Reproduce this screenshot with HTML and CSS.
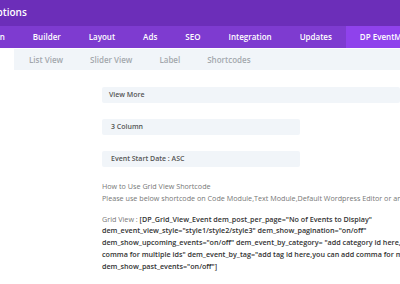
FILE: index.html
```html
<html>

<head>
<link rel="stylesheet" href="styles.css">
</head>

<body>

<div class="header">
    <h1>Theme Options</h1>
</div>

<div class="nav">
    <a href="#">Navigation</a>
    <a href="#">Builder</a>
    <a href="#">Layout</a>
    <a href="#">Ads</a>
    <a href="#">SEO</a>
    <a href="#">Integration</a>
    <a href="#">Updates</a>
    <a href="#" class="active">DP EventManager</a>
</div>

<div class="subnav">
    <a href="#">List View</a>
    <a href="#">Slider View</a>
    <a href="#">Label</a>
    <a href="#">Shortcodes</a>
</div>

<div class="content">
    <div class="fields">
        <div class="field wide">View More</div>
        <div class="field">3 Column</div>
        <div class="field">Event Start Date : ASC</div>
    </div>

    <div class="info">
        <p>
            How to Use Grid View Shortcode<br>
            Please use below shortcode on Code Module,Text Module,Default Wordpress Editor or any other place
        </p>
        <p>
            Grid View : <b>[DP_Grid_View_Event dem_post_per_page="No of Events to Display"<br>
            dem_event_view_style="style1/style2/style3" dem_show_pagination="on/off"<br>
            dem_show_upcoming_events="on/off" dem_event_by_category= "add category id here, you can add<br>
            comma for multiple ids" dem_event_by_tag="add tag id here,you can add comma for multiple ids"<br>
            dem_show_past_events="on/off"]</b>
        </p>
    </div>
</div>

</body>

</html>
```

FILE: styles.css
```css
html,
body {
    margin: 0;
    overflow: hidden;
    background: #fff;
    font-family: "Open Sans", sans-serif;
}

a {
    text-decoration: none;
}

.header {
    height: 26px;
    background: #6c2eb9;
    color: #fff;
    display: flex;
    align-items: center;
    overflow: hidden;
}
.header h1 {
    margin: 0 0 3px -47px;
    font-size: 10px;
    font-weight: 600;
    white-space: nowrap;
}

.nav {
    height: 22px;
    background: #7e3bd0;
    display: flex;
    overflow: hidden;
}
.nav a {
    flex: none;
    padding: 0 14px;
    line-height: 22px;
    font-size: 8px;
    font-weight: 600;
    color: #fff;
}
.nav a:first-child {
    margin-left: -51px;
}
.nav a.active {
    background: #8f42ec;
}

.subnav {
    margin: 1px 0 0 14px;
    height: 21px;
    background: #f1f5f9;
    display: flex;
    align-items: center;
}
.subnav a {
    padding: 0 13.5px;
    font-size: 8px;
    font-weight: 600;
    color: #a3a8ad;
}
.subnav a:first-child {
    padding-left: 15px;
}

.content {
    padding: 17px 0 0 102px;
}

.fields {
    display: flex;
    flex-direction: column;
    gap: 16px;
}
.field {
    width: 189px;
    height: 16px;
    padding-left: 9px;
    line-height: 16px;
    background: #f1f5f9;
    border-radius: 2px;
    font-size: 7px;
    font-weight: 600;
    color: #555;
}
.field.wide {
    width: auto;
    padding-left: 7px;
}

.info {
    margin-top: 14px;
    font-size: 7.2px;
    line-height: 11.7px;
    color: #777;
    white-space: nowrap;
}
.info p {
    margin: 0 0 9.3px;
}
.info b {
    font-weight: 600;
    color: #333;
}
```
